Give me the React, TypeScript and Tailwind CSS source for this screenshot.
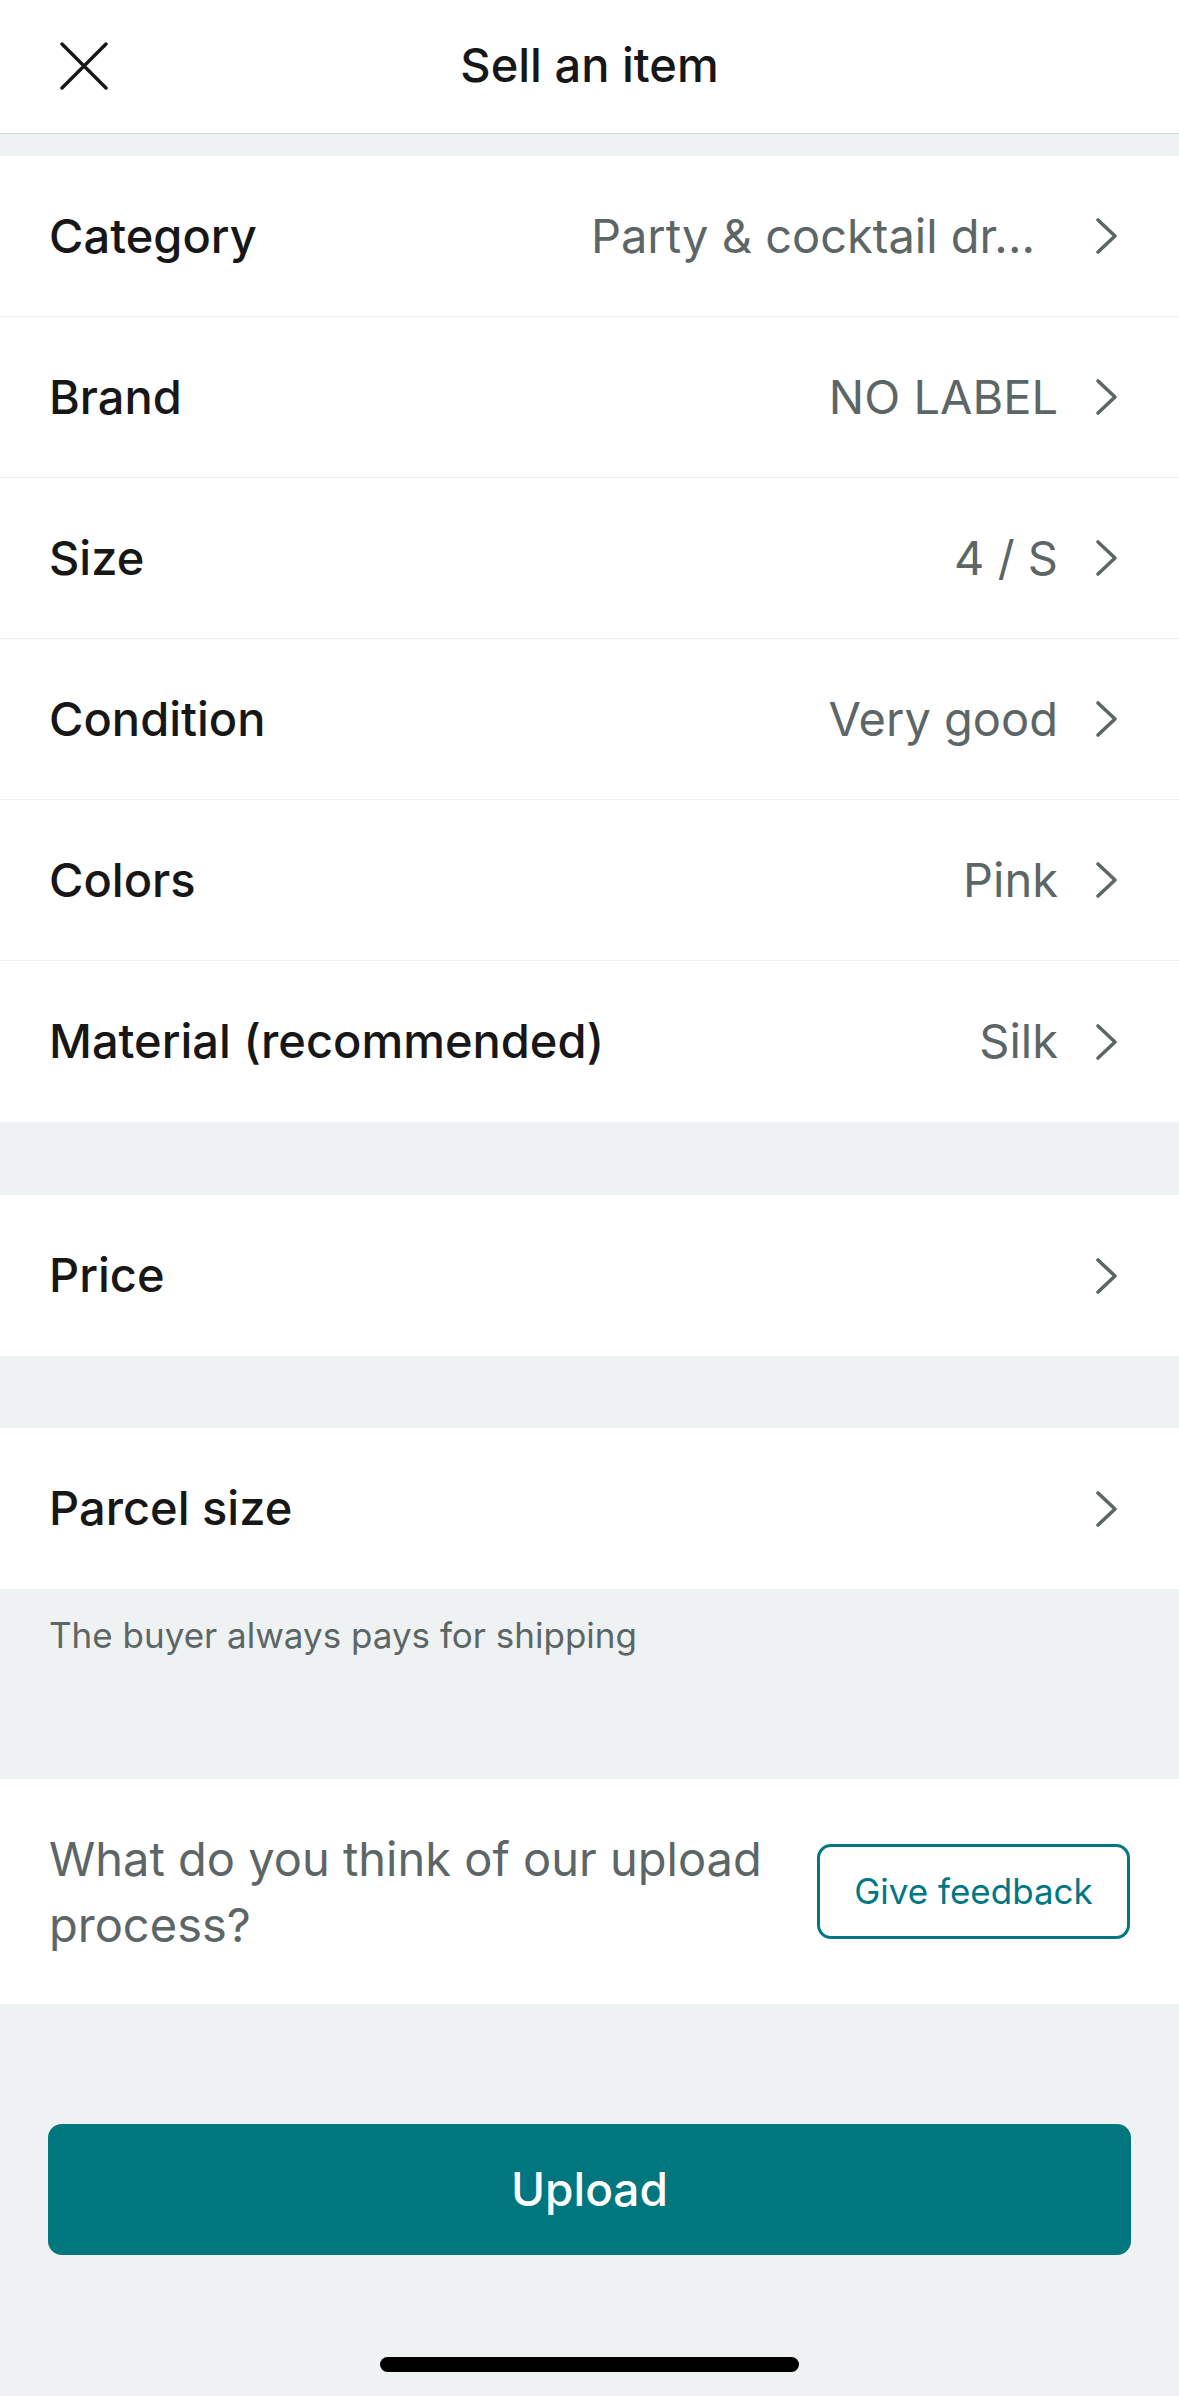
const attributes = [
  { label: "Category", value: "Party & cocktail dr...", extra: true },
  { label: "Brand", value: "NO LABEL" },
  { label: "Size", value: "4 / S" },
  { label: "Condition", value: "Very good" },
  { label: "Colors", value: "Pink" },
  { label: "Material (recommended)", value: "Silk" },
];

function Chevron() {
  return (
    <svg width="24" height="38" viewBox="0 0 24 38" fill="none" className="shrink-0">
      <path d="M3 3L20 19L3 35" stroke="#5d6666" strokeWidth="3.6" strokeLinecap="round" strokeLinejoin="round" />
    </svg>
  );
}

function Row({ label, value, last, extra }: { label: string; value?: string; last?: boolean; extra?: boolean }) {
  return (
    <div className={`flex items-center h-[161px] pl-[49px] pr-[60px] bg-white ${last ? "" : "border-b border-[#f0f1f1]"}`}>
      <span className="flex-1 text-[47px] font-medium text-[#171717]">{label}</span>
      {value && <span className={`text-[47px] text-[#5d6666] ${extra ? "mr-[60px]" : "mr-[37px]"}`}>{value}</span>}
      <Chevron />
    </div>
  );
}

export default function App() {
  return (
    <div className="w-[1179px] h-[2396px] bg-[#eff2f2] flex flex-col" style={{ fontFamily: "Inter, 'Noto Sans', sans-serif" }}>
      <header className="relative h-[134px] bg-white border-b border-[#d9dddd] flex items-center justify-center">
        <svg className="absolute left-[60px] top-[42px]" width="48" height="48" viewBox="0 0 48 48" fill="none">
          <path d="M2 2L46 46M46 2L2 46" stroke="#171717" strokeWidth="3.4" strokeLinecap="round" />
        </svg>
        <h1 className="text-[47px] font-medium text-[#171717] -mt-[2px]">Sell an item</h1>
      </header>

      <div className="mt-[22px] flex flex-col">
        {attributes.map((a, i) => (
          <Row key={a.label} label={a.label} value={a.value} extra={a.extra} last={i === attributes.length - 1} />
        ))}
      </div>

      <div className="mt-[73px]">
        <Row label="Price" last />
      </div>

      <div className="mt-[72px]">
        <Row label="Parcel size" last />
      </div>

      <div className="h-[190px] px-[49px] pt-[20px]">
        <p className="text-[35px] text-[#5d6666]">The buyer always pays for shipping</p>
      </div>

      <div className="h-[225px] bg-white flex items-center pl-[49px] pr-[49px] gap-[36px]">
        <p className="flex-1 text-[47px] leading-[66px] text-[#5d6666]">What do you think of our upload process?</p>
        <button className="w-[313px] h-[95px] border-[3px] border-[#007782] rounded-[14px] text-[35px] text-[#007782]">
          Give feedback
        </button>
      </div>

      <div className="mt-[120px] px-[48px]">
        <button className="w-full h-[131px] bg-[#00777f] rounded-[14px] text-white text-[46px] font-medium">
          Upload
        </button>
      </div>

      <div className="flex-1 flex items-end justify-center pb-[24px]">
        <div className="w-[419px] h-[15px] bg-black rounded-full" />
      </div>
    </div>
  );
}
